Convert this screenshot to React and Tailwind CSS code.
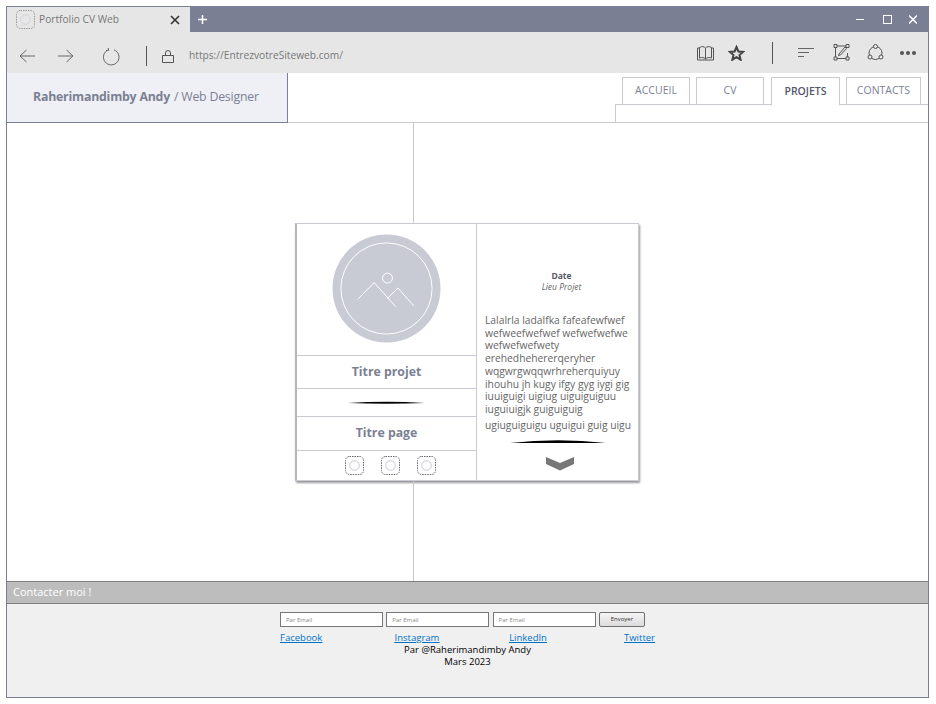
import React from "react";

const font = { fontFamily: '"Open Sans", "Noto Sans", sans-serif' };

function NavTab({ label, active, width }) {
  return (
    <div
      className={`${width} h-[28px] flex items-center justify-center border border-[#c8cad4] bg-white text-[10.500px] ${
        active ? "border-b-white font-semibold text-[#555868] h-[29px] relative z-10 -mb-px" : "text-[#7b7f93]"
      }`}
    >
      {label}
    </div>
  );
}

function DashedIcon({ className }) {
  return (
    <svg className={className} width="19" height="19" viewBox="0 0 19 19" fill="none">
      <rect x="0.5" y="0.5" width="18" height="18" rx="4" stroke="#666" strokeDasharray="1.5 1" />
      <circle cx="9.5" cy="9.5" r="4.8" stroke="#c8cad4" />
    </svg>
  );
}

function BrowserChrome() {
  return (
    <>
      <div className="h-[25px] bg-[#7b7f93] flex items-stretch">
        <div className="w-[183px] bg-[#e6e6e6] flex items-center pl-[9px]">
          <DashedIcon className="shrink-0 opacity-60" />
          <span className="ml-[4px] text-[10.200px] text-[#777]">Portfolio CV Web</span>
          <svg className="ml-auto mr-[10px]" width="10" height="10" viewBox="0 0 10 10" stroke="#333" strokeWidth="1.6">
            <path d="M1 1l8 8M9 1l-8 8" />
          </svg>
        </div>
        <svg className="ml-[7px] self-center" width="11" height="11" viewBox="0 0 11 11" stroke="#fff" strokeWidth="1.5">
          <path d="M5.500 1v9M1 5.500h9" />
        </svg>
        <div className="ml-auto flex items-center pr-[11px]">
          <svg width="8" height="9" viewBox="0 0 8 9" stroke="#fff"><path d="M0 4.500h8" /></svg>
          <svg className="ml-[19px]" width="9" height="9" viewBox="0 0 9 9" fill="none" stroke="#fff"><rect x="0.5" y="0.5" width="8" height="8" /></svg>
          <svg className="ml-[17px]" width="8" height="9" viewBox="0 0 8 9" stroke="#fff" strokeWidth="1.5"><path d="M0 .5l8 8M8 .5l-8 8" /></svg>
        </div>
      </div>
      <div className="h-[41px] bg-[#e6e6e6] flex items-center">
        <div className="flex items-center mt-[7px]">
          <svg className="ml-[12px]" width="16" height="14" viewBox="0 0 16 14" fill="none" stroke="#666"><path d="M16 7H1M7.500 1L1 7l6.500 6" /></svg>
          <svg className="ml-[23px]" width="16" height="14" viewBox="0 0 16 14" fill="none" stroke="#666"><path d="M0 7h15M8.500 1L15 7l-6.500 6" /></svg>
          <svg className="ml-[29px]" width="17" height="19" viewBox="0 0 17 19" fill="none" stroke="#666"><path d="M11 2.800A7.800 7.800 0 1 1 5.500 2.800M5 1l.8 2.200L3 3.800" /></svg>
          <div className="ml-[26px] w-px h-[20px] bg-[#555]" />
          <svg className="ml-[15px]" width="12" height="13" viewBox="0 0 12 13" fill="none" stroke="#555"><path d="M.5 5.500h11v7H.5zM3.500 5.500V3a2.500 2.500 0 0 1 5 0v2.500" /></svg>
          <span className="ml-[15px] text-[10.200px] text-[#777]">https://EntrezvotreSiteweb.com/</span>
        </div>
        <div className="ml-auto flex items-center pr-[12px]">
          <svg width="17" height="16" viewBox="0 0 17 16" fill="none" stroke="#555"><path d="M.5 3h2v-.5C5 1 7 1.500 8.500 3 10 1.500 12 1 14.500 2.500V3h2v12h-16zM2.500 3v10C5 12 7 12.500 8.500 14 10 12.500 12 12 14.500 13V3M8.500 3v11" /></svg>
          <svg className="ml-[14px]" width="17" height="16" viewBox="0 0 17 16" fill="none" stroke="#444" strokeWidth="2"><path d="M8.500 2l1.900 4.500 4.700.4-3.600 3.100 1.100 4.700-4.100-2.500-4.100 2.500 1.100-4.700L1.900 6.900l4.700-.4z" /></svg>
          <div className="ml-[27px] w-px h-[22px] bg-[#555]" />
          <svg className="ml-[25px]" width="16" height="12" viewBox="0 0 16 12" stroke="#666"><path d="M0 1.500h16M0 5.500h11M0 9.500h6" /></svg>
          <svg className="ml-[19px]" width="17" height="17" viewBox="0 0 17 17" fill="none" stroke="#555"><path d="M4 2h9M4 14.500h9M2.500 4v9M14.500 9v4M1 .5h3v3H1zM13 .5h3v3h-3zM1 13h3v3H1zM13 13h3v3h-3zM6 10l6-7 1.500 1.500-6 6.500-2 .5z" /></svg>
          <svg className="ml-[17px]" width="17" height="17" viewBox="0 0 17 17" fill="none" stroke="#555"><circle cx="8.500" cy="9" r="6.500" /><circle cx="8.500" cy="2.500" r="2" fill="#e6e6e6" /><circle cx="3" cy="13" r="2" fill="#e6e6e6" /><circle cx="14" cy="13" r="2" fill="#e6e6e6" /></svg>
          <div className="ml-[16px] flex gap-[2px]">
            <span className="w-[4px] h-[4px] rounded-full bg-[#555]" />
            <span className="w-[4px] h-[4px] rounded-full bg-[#555]" />
            <span className="w-[4px] h-[4px] rounded-full bg-[#555]" />
          </div>
        </div>
      </div>
    </>
  );
}

function SiteHeader() {
  return (
    <header className="h-[50px] flex">
      <div className="w-[281px] bg-[#eff0f5] border-r border-b border-[#7b7f93] flex items-center pl-[26px] text-[12.300px] tracking-[-0.2px] text-[#7b7f93]">
        <b className="font-bold">Raherimandimby Andy</b>
        <span className="ml-[4px]">/ Web Designer</span>
      </div>
      <div className="flex-1 border-b border-[#c8cad4] flex flex-col items-end">
        <div className="flex gap-[6px] pt-[4px] pr-[7px]">
          <NavTab label="ACCUEIL" width="w-[68px]" />
          <NavTab label="CV" width="w-[68px]" />
          <div className="ml-px">
            <NavTab label="PROJETS" width="w-[69px]" active />
          </div>
          <NavTab label="CONTACTS" width="w-[75px]" />
        </div>
        <div className="w-[313px] flex-1 border-t border-l border-[#c8cad4] -mt-px" />
      </div>
    </header>
  );
}

function ProjectCard() {
  return (
    <div className="ml-[288px] w-[344px] h-[258px] shrink-0 bg-white flex border border-[#c8cad4] border-l-[2px] border-l-[#b5b5bb] shadow-[1px_2px_2px_#999]">
      <div className="w-[180px] border-r border-[#c8cad4] flex flex-col text-[#7b7f93] font-bold text-[12.300px]">
        <div className="h-[132px] flex items-center justify-center border-b border-[#c8cad4] pb-[2px]">
          <svg width="109" height="109" viewBox="0 0 110 110" fill="none">
            <circle cx="55" cy="55" r="54.500" fill="#c8cad4" />
            <circle cx="55" cy="55" r="46" stroke="#fff" strokeWidth="1" />
            <circle cx="56" cy="44.500" r="5" stroke="#fff" strokeWidth="1" />
            <path d="M26 66l16.500-17 22 24.500M56 65l10.500-10.500 16 18" stroke="#fff" strokeWidth="1" />
          </svg>
        </div>
        <div className="h-[33px] flex items-center justify-center border-b border-[#c8cad4]">Titre projet</div>
        <div className="h-[28px] flex items-center justify-center border-b border-[#c8cad4] pr-[1px]">
          <svg width="77" height="4" viewBox="0 0 77 4"><path d="M0 2Q38 -.5 77 2Q38 3.500 0 2Z" fill="#000" /></svg>
        </div>
        <div className="h-[34px] flex items-center justify-center border-b border-[#c8cad4]">Titre page</div>
        <div className="flex-1 flex items-center justify-center gap-[17px] pl-[8px]">
          <DashedIcon />
          <DashedIcon />
          <DashedIcon />
        </div>
      </div>
      <div className="flex-1 flex flex-col pl-[8px] pt-[46px] text-[#666]">
        <div className="text-center text-[8.500px] leading-[11px]">
          <div className="font-bold text-[#555868]">Date</div>
          <div className="italic">Lieu Projet</div>
        </div>
        <div className="mt-[22px] text-[10.300px] leading-[12.700px] whitespace-nowrap">
          <div>Lalalrla ladalfka fafeafewfwef</div>
          <div>wefweefwefwef wefwefwefwe</div>
          <div>wefwefwefwety</div>
          <div>erehedhehererqeryher</div>
          <div>wqgwrgwqqwrhreherquiyuy</div>
          <div>ihouhu jh kugy ifgy gyg iygi gig</div>
          <div>iuuiguigi uigiug uiguiguiguu</div>
          <div>iuguiuigjk guiguiguig</div>
          <div className="mt-[3px]">ugiuguiguigu uguigui guig uigu</div>
        </div>
        <svg className="mt-[8px] ml-[25px]" width="96" height="4" viewBox="0 0 96 4"><path d="M0 4Q48 -1.500 96 4Z" fill="#000" /></svg>
        <svg className="mt-[13px] ml-[61px]" width="28" height="15" viewBox="0 0 28 15"><path d="M0 1l14 6 14-6v7l-14 6.500L0 8z" fill="#777" /></svg>
      </div>
    </div>
  );
}

function EmailInput() {
  return (
    <input
      readOnly
      placeholder="Par Email"
      className="w-[103px] h-[15px] bg-white border border-[#777] px-[5px] text-[6px] placeholder:text-[#888]"
    />
  );
}

function Footer() {
  return (
    <footer className="flex flex-col h-[116px]">
      <div className="h-[23px] bg-[#bdbdbd] border-y border-[#7f7f7f] pl-[6px] flex items-center text-[11px] text-white">Contacter moi !</div>
      <div className="flex-1 bg-[#f0f0f0] pt-[8px] pl-[273px]">
        <div className="flex gap-[3.300px]">
          <EmailInput />
          <EmailInput />
          <EmailInput />
          <button className="w-[46px] h-[15px] border border-[#707070] rounded-[2px] bg-gradient-to-b from-[#f5f5f5] to-[#dcdcdc] text-[6px] text-[#333]">Envoyer</button>
        </div>
        <div className="mt-[5px] w-[375px] flex justify-between text-[9.500px] leading-[12px] text-[#0072c6] underline">
          <a className="w-[114.700px]">Facebook</a>
          <a className="w-[114.700px]">Instagram</a>
          <a className="w-[115px]">LinkedIn</a>
          <a>Twitter</a>
        </div>
        <div className="w-[375px] text-center text-[9.500px] leading-[12px] text-black">
          <div>Par @Raherimandimby Andy</div>
          <div>Mars 2023</div>
        </div>
      </div>
    </footer>
  );
}

export default function App() {
  return (
    <div className="w-[936px] h-[704px] bg-white pt-[6px] pl-[6px]" style={font}>
      <div className="w-[923px] h-[692px] border border-[#7b7f93] flex flex-col overflow-hidden">
        <BrowserChrome />
        <SiteHeader />
        <main className="flex-1 flex flex-col min-h-0">
          <div className="flex-1 w-px ml-[406px] bg-[#c8c8cc]" />
          <ProjectCard />
          <div className="flex-1 w-px ml-[406px] bg-[#c8c8cc]" />
        </main>
        <Footer />
      </div>
    </div>
  );
}
